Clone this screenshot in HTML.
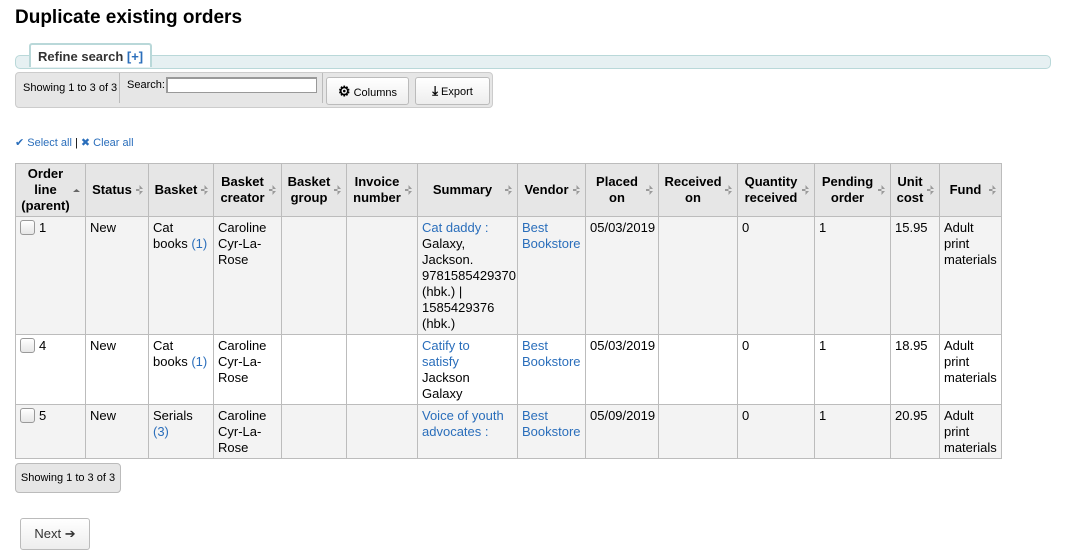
<!DOCTYPE html>
<html><head><style>
body{margin:0;width:1065px;height:554px;background:#fff;font-family:"Liberation Sans",sans-serif;font-size:13px;color:#000;position:relative;overflow:hidden}
h1{position:absolute;left:15px;top:7px;margin:0;font-size:19px;font-weight:bold}
a{color:#2a6ebb;text-decoration:none}
.fs{position:absolute;left:15px;top:55px;width:1034px;height:12px;border:1px solid #b9d8d9;border-radius:5px;background:#e6f0f2}
.leg{position:absolute;left:29px;top:43px;height:22px;padding:0 7px;border:2px solid #b9d8d9;border-bottom:0;background:#fff;font-weight:bold;font-size:13px;line-height:24px;color:#333;border-radius:3px 3px 0 0}
.bar{position:absolute;left:15px;top:72px;width:476px;height:34px;background:#e6e6e6;border:1px solid #ccc;border-radius:4px;font-size:11px}
.btn{position:absolute;background:linear-gradient(#fff,#ededed);border:1px solid #bbb;border-radius:3px;font-size:11px;text-align:center;color:#000}
table{position:absolute;left:15px;top:163px;border-collapse:collapse;table-layout:fixed;width:987px}
td,th{border:1px solid #bcbcbc;padding:3px 4px 2px;vertical-align:top;line-height:16px;font-size:13px}
th{background:#e6e6e6;vertical-align:middle;text-align:center;position:relative;padding-right:14px;padding-top:2px;padding-bottom:2px}
th:after{content:"";position:absolute;right:5px;top:50%;margin-top:-5px;width:7px;height:10px;background:#999;clip-path:polygon(50% 0,100% 40%,0 40%,0 60%,100% 60%,50% 100%)}
th.asc:after{clip-path:polygon(50% 40%,100% 70%,0 70%);background:#666}
tr.g td{background:#f3f3f3}
.cb{display:inline-block;width:13px;height:13px;border:1px solid #999;border-radius:3px;background:linear-gradient(#fff,#e6e6e6);vertical-align:-3px;margin-right:4px}
</style></head><body>
<h1>Duplicate existing orders</h1>
<div class="fs"></div>
<div class="leg">Refine search <a>[+]</a></div>
<div class="bar">
<div style="position:absolute;left:7px;top:9px">Showing 1 to 3 of 3</div>
<div style="position:absolute;left:103px;top:0;height:30px;border-left:1px solid #bbb"></div>
<div style="position:absolute;left:111px;top:6px">Search:</div>
<div style="position:absolute;left:150px;top:4px;width:148px;height:13px;background:#fff;border:1px solid #999;border-width:2px 1px 1px 2px"></div>
<div style="position:absolute;left:306px;top:0;height:30px;border-left:1px solid #bbb"></div>
<div class="btn" style="left:310px;top:4px;width:81px;height:26px;line-height:26px"><b style="font-size:14px">&#9881;</b> Columns</div>
<div class="btn" style="left:399px;top:4px;width:73px;height:26px;line-height:26px"><b style="font-size:13px">&#10515;</b> Export</div>
</div>
<div style="position:absolute;left:15px;top:136px;font-size:11px"><a>✔ Select all</a> | <a>✖ Clear all</a></div>
<table>
<colgroup><col style="width:70px"><col style="width:63px"><col style="width:65px"><col style="width:68px"><col style="width:65px"><col style="width:71px"><col style="width:100px"><col style="width:68px"><col style="width:73px"><col style="width:79px"><col style="width:77px"><col style="width:76px"><col style="width:49px"><col style="width:62px"></colgroup>
<tr style="height:53px"><th class="asc">Order line (parent)</th><th>Status</th><th>Basket</th><th>Basket creator</th><th>Basket group</th><th>Invoice number</th><th>Summary</th><th>Vendor</th><th>Placed on</th><th>Received on</th><th>Quantity received</th><th>Pending order</th><th>Unit cost</th><th>Fund</th></tr>
<tr class="g" style="height:118px"><td><span class="cb"></span>1</td><td>New</td><td>Cat books <a>(1)</a></td><td>Caroline Cyr-La-Rose</td><td></td><td></td><td><a>Cat daddy :</a> Galaxy, Jackson. 9781585429370 (hbk.) | 1585429376 (hbk.)</td><td><a>Best Bookstore</a></td><td>05/03/2019</td><td></td><td>0</td><td>1</td><td>15.95</td><td>Adult print materials</td></tr>
<tr style="height:69px"><td><span class="cb"></span>4</td><td>New</td><td>Cat books <a>(1)</a></td><td>Caroline Cyr-La-Rose</td><td></td><td></td><td><a>Catify to<br>satisfy</a><br>Jackson<br>Galaxy</td><td><a>Best Bookstore</a></td><td>05/03/2019</td><td></td><td>0</td><td>1</td><td>18.95</td><td>Adult print materials</td></tr>
<tr class="g" style="height:53px"><td><span class="cb"></span>5</td><td>New</td><td>Serials <a>(3)</a></td><td>Caroline Cyr-La-Rose</td><td></td><td></td><td><a>Voice of youth advocates :</a></td><td><a>Best Bookstore</a></td><td>05/09/2019</td><td></td><td>0</td><td>1</td><td>20.95</td><td>Adult print materials</td></tr>
</table>
<div style="position:absolute;left:15px;top:463px;width:104px;height:28px;background:#e6e6e6;border:1px solid #bbb;border-radius:4px;font-size:11px;line-height:28px;text-align:center">Showing 1 to 3 of 3</div>
<div class="btn" style="left:20px;top:518px;width:68px;height:30px;line-height:30px;font-size:13px;color:#333">Next ➔</div>
</body></html>
